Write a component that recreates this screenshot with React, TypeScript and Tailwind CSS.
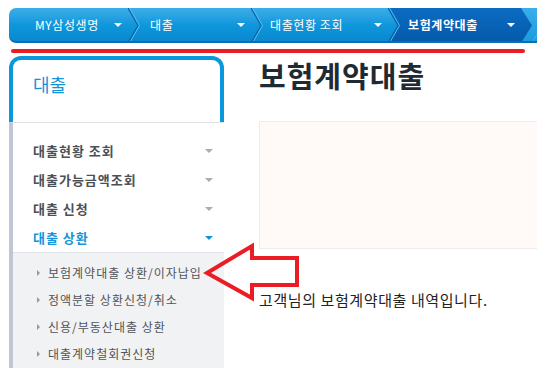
import React from 'react'

const navItems = [
  { label: 'MY삼성생명', width: 'w-[119px]', pad: 'pl-[26px]' },
  { label: '대출', width: 'w-[123px]', pad: 'pl-[22px]' },
  { label: '대출현황 조회', width: 'w-[137px]', pad: 'pl-[19px]' },
  { label: '보험계약대출', width: 'w-[133px]', pad: 'pl-[20px]', active: true },
]

const menu = [
  { label: '대출현황 조회' },
  { label: '대출가능금액조회' },
  { label: '대출 신청' },
  { label: '대출 상환', open: true },
]

const subMenu = ['보험계약대출 상환/이자납입', '정액분할 상환신청/취소', '신용/부동산대출 상환', '대출계약철회권신청']

function Chevron() {
  return (
    <svg className="absolute left-0 top-0 z-20" width="14" height="35" viewBox="0 0 14 35">
      <polyline points="0,0 10,17.5 0,35" fill="none" stroke="#0a65a6" strokeWidth="1.3" />
      <polyline points="1.5,0 11.5,17.5 1.5,35" fill="none" stroke="#58bff0" strokeWidth="1" />
    </svg>
  )
}

function Caret({ color = 'border-t-white' }: { color?: string }) {
  return <span className={`inline-block w-0 h-0 border-x-[4px] border-x-transparent border-t-[4px] ${color}`} />
}

export default function App() {
  return (
    <div className="relative w-[537px] h-[373px] overflow-hidden bg-white [font-family:'Noto_Sans_CJK_KR',sans-serif]">
      <div className="pt-[8px] pl-[9px]">
        <nav className="flex w-[560px] h-[35px] rounded-l-[7px] overflow-hidden bg-gradient-to-b from-[#3aaee9] via-[#0f97dc] to-[#0a88cf] border-b-2 border-[#0b6db2]">
          {navItems.map((item, i) => (
            <div key={item.label} className={`relative shrink-0 h-full ${item.width}`}>
              {item.active && (
                <div className="absolute left-0 top-0 z-10 h-[35px] w-[145px] bg-gradient-to-b from-[#0b6cc2] to-[#0659aa] [clip-path:polygon(0_0,133px_0,144px_50%,133px_100%,0_100%,10px_50%)]" />
              )}
              {i > 0 && <Chevron />}
              <div className={`relative z-20 flex h-[33px] items-center justify-between pr-[6px] ${item.pad}`}>
                <span className={`text-[12px] tracking-[0.6px] text-white ${item.active ? 'font-bold' : ''}`}>{item.label}</span>
                <Caret />
              </div>
            </div>
          ))}
          <div className="relative flex-1 h-full bg-gradient-to-b from-[#3aaee9] to-[#1a9be0]">
            <div className="absolute left-[11px] top-0 z-20">
              <svg width="14" height="35" viewBox="0 0 14 35">
                <polyline points="0,0 10,17.5 0,35" fill="none" stroke="#3fb2ec" strokeWidth="1" />
              </svg>
            </div>
          </div>
        </nav>
      </div>

      <div className="ml-[11px] mt-[6px] w-[514px] h-[4px] rounded-full bg-[#ec1c24]" />

      <div className="flex mt-[3px] ml-[9px]">
        <aside className="w-[215px] shrink-0">
          <div className="h-[66px] border-4 border-b-0 border-[#0a98dc] rounded-t-[12px] pl-[20px] pt-[12px]">
            <h2 className="text-[18px] leading-[24px] text-[#1394d8]">대출</h2>
          </div>
          <div className="border-t border-[#dfe3e7] border-l-4 border-l-[#bfc8d2]">
            <ul className="pt-[13px] border-b border-[#dfe3e7]">
              {menu.map((m) => (
                <li key={m.label} className="flex h-[29px] items-center justify-between pl-[20px] pr-[11px]">
                  <span className={`text-[13px] tracking-[1px] font-bold ${m.open ? 'text-[#1596d9]' : 'text-[#4b5056]'}`}>{m.label}</span>
                  <Caret color={m.open ? 'border-t-[#0a95dc]' : 'border-t-[#a8aeb4]'} />
                </li>
              ))}
            </ul>
            <ul className="bg-[#f1f2f4] pt-[6px] pb-[1px]">
              {subMenu.map((s) => (
                <li key={s} className="flex h-[27px] items-center gap-[8px] pl-[24px]">
                  <span className="inline-block w-0 h-0 border-y-[3px] border-y-transparent border-l-[3px] border-l-[#999]" />
                  <span className="text-[12px] tracking-[1px] text-[#505458]">{s}</span>
                </li>
              ))}
            </ul>
          </div>
        </aside>

        <main className="ml-[35px] flex-1">
          <h1 className="mt-[2px] text-[29px] leading-[34px] tracking-[1px] font-bold text-[#1f2a33]">보험계약대출</h1>
          <div className="mt-[29px] h-[128px] w-[300px] bg-[#fffaf7] border border-[#ececec]" />
          <p className="mt-[41px] text-[15px] leading-[20px] tracking-[0.6px] text-[#222]">고객님의 보험계약대출 내역입니다.</p>
        </main>
      </div>

      <svg className="absolute left-[200px] top-[240px]" width="100" height="62" viewBox="0 0 100 62">
        <polygon
          points="7,33 52,6 52,18 97,18 97,45 52,45 52,58"
          fill="none"
          stroke="#ea1c24"
          strokeWidth="4"
          strokeLinejoin="miter"
        />
      </svg>
    </div>
  )
}
